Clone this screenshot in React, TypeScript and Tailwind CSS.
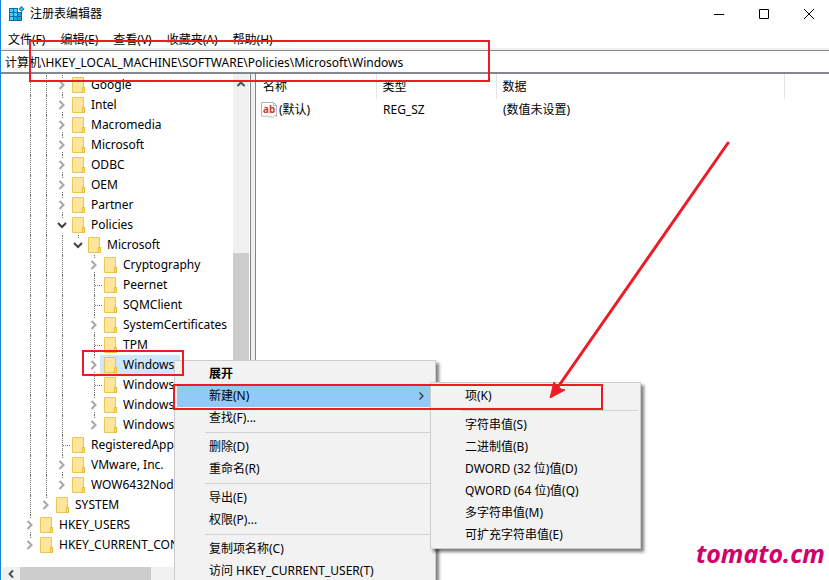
import { ChevronLeft, ChevronUp } from "lucide-react";

type TreeNode = {
  label: string;
  // which ancestor columns carry a guide line past this row
  guides: boolean[];
  state: "closed" | "open" | "leaf";
  last?: boolean;
  selected?: boolean;
};

const deep = [true, true, true, false];

const nodes: TreeNode[] = [
  { label: "Google", guides: [true, true], state: "closed" },
  { label: "Intel", guides: [true, true], state: "closed" },
  { label: "Macromedia", guides: [true, true], state: "closed" },
  { label: "Microsoft", guides: [true, true], state: "closed" },
  { label: "ODBC", guides: [true, true], state: "closed" },
  { label: "OEM", guides: [true, true], state: "closed" },
  { label: "Partner", guides: [true, true], state: "closed" },
  { label: "Policies", guides: [true, true], state: "open" },
  { label: "Microsoft", guides: [true, true, true], state: "open", last: true },
  { label: "Cryptography", guides: deep, state: "closed" },
  { label: "Peernet", guides: deep, state: "leaf" },
  { label: "SQMClient", guides: deep, state: "leaf" },
  { label: "SystemCertificates", guides: deep, state: "closed" },
  { label: "TPM", guides: deep, state: "leaf" },
  { label: "Windows", guides: deep, state: "closed", selected: true },
  { label: "Windows", guides: deep, state: "leaf" },
  { label: "Windows", guides: deep, state: "closed" },
  { label: "Windows", guides: deep, state: "closed", last: true },
  { label: "RegisteredApps", guides: [true, true], state: "leaf" },
  { label: "VMware, Inc.", guides: [true, true], state: "closed" },
  { label: "WOW6432Node", guides: [true, true], state: "closed", last: true },
  { label: "SYSTEM", guides: [true], state: "closed", last: true },
  { label: "HKEY_USERS", guides: [], state: "closed" },
  { label: "HKEY_CURRENT_CONFIG", guides: [], state: "closed", last: true },
];

const menus = ["文件(F)", "编辑(E)", "查看(V)", "收藏夹(A)", "帮助(H)"];

const contextMenu = [
  ["展开", "新建(N)", "查找(F)..."],
  ["删除(D)", "重命名(R)"],
  ["导出(E)", "权限(P)..."],
  ["复制项名称(C)", "访问 HKEY_CURRENT_USER(T)"],
];

const newMenu = [
  ["项(K)"],
  [
    "字符串值(S)",
    "二进制值(B)",
    "DWORD (32 位)值(D)",
    "QWORD (64 位)值(Q)",
    "多字符串值(M)",
    "可扩充字符串值(E)",
  ],
];

function RegistryIcon() {
  return (
    <svg className="h-4 w-4" viewBox="0 0 16 16" aria-hidden="true">
      <path d="M0 2h13v13H0z" fill="#0a6ea6" />
      <path d="M1 3h3v3H1zM5 3h3v3H5zM1 7h3v3H1zM5 7h3v3H5zM1 11h3v3H1z" fill="#4fcbf7" />
      <path d="M9 7h3v3H9zM5 11h3v3H5zM9 11h3v3H9z" fill="#1ea3dc" />
      <path d="M9 0h7v6H9z" fill="#fff" />
      <path d="m12.500 0 3 3-3 3-3-3z" fill="#1579ae" />
      <path d="m12.500 1.500 1.500 1.500-1.500 1.500L11 3z" fill="#52c8f2" />
    </svg>
  );
}

function FolderIcon() {
  return (
    <svg className="h-4 w-[13px] shrink-0" viewBox="0 0 13 16" aria-hidden="true">
      <path d="M.5.5h11v10h1v5H.5z" fill="#ffe69a" stroke="#eac551" />
      <path d="M10.500 15.500v-5h2v5z" fill="#ffe18a" stroke="#e6bb3c" />
    </svg>
  );
}

function StringIcon() {
  return (
    <svg className="h-4 w-4 shrink-0" viewBox="0 0 16 16" aria-hidden="true">
      <path d="M.5.5h12l3 3v11l-2-1-2 2-2-1-2 .5-2-1-2 .5-3-.5z" fill="#fff" stroke="#b5b5b5" />
      <path d="M12.500.500v3h3" fill="none" stroke="#b5b5b5" />
      <text x="2" y="11" fontSize="10" fontWeight="700" fontFamily="Noto Sans, sans-serif" fill="#d0401f">
        ab
      </text>
    </svg>
  );
}

function Expander({ open }: { open: boolean }) {
  return (
    <svg className="h-[10px] w-[10px] shrink-0" viewBox="0 0 10 10" fill="none" strokeWidth="2" aria-hidden="true">
      {open ? <path d="m1 3 4 4 4-4" stroke="#404040" /> : <path d="m2.500 1 4 4-4 4" stroke="#a6a6a6" />}
    </svg>
  );
}

function TreeRow({ node }: { node: TreeNode }) {
  return (
    <li className="flex h-5 items-center whitespace-nowrap">
      {node.guides.map((on, i) => (
        <span key={i} className="flex h-5 w-4 shrink-0 justify-center">
          {on && <span className="w-px border-l border-dotted border-[#707070]" />}
        </span>
      ))}
      {node.state === "leaf" ? (
        <span className="flex h-5 w-4 shrink-0 items-center pl-2">
          <span className="h-full border-l border-dotted border-[#707070]" />
          <span className="grow border-t border-dotted border-[#707070]" />
        </span>
      ) : (
        <button aria-label={node.label} className="flex h-5 w-4 shrink-0 flex-col items-center justify-between">
          <span className="h-[3px] border-l border-dotted border-[#707070]" />
          <Expander open={node.state === "open"} />
          {node.last || node.state === "open" ? (
            <span className="h-[3px]" />
          ) : (
            <span className="h-[3px] border-l border-dotted border-[#707070]" />
          )}
        </button>
      )}
      <span className={"flex h-5 items-center gap-1.5 " + (node.selected ? "-ml-0.5 bg-[#cce8ff] pr-1.5 pl-1" : "pl-0.5")}>
        <FolderIcon />
        <span>{node.label}</span>
      </span>
    </li>
  );
}

function MenuGroups({ groups, active }: { groups: string[][]; active?: string }) {
  return (
    <>
      {groups.map((group, i) => (
        <div key={i}>
          {i > 0 && <hr className="my-[3px] ml-7 border-t border-[#d3d3d3]" />}
          {group.map((label) => (
            <button
              key={label}
              role="menuitem"
              className={
                "flex h-[22px] w-full items-center justify-between pr-1.5 pl-8 whitespace-nowrap " +
                (label === active ? "bg-[#91c9f7] " : "") +
                (label === "展开" ? "font-bold" : "")
              }
            >
              {label}
              {label === active && (
                <svg width="5" height="8" viewBox="0 0 5 8" fill="none" aria-hidden="true">
                  <path d="m.5.5 3.500 3.500L.5 7.500" stroke="#303030" strokeWidth="1.200" />
                </svg>
              )}
            </button>
          ))}
        </div>
      ))}
    </>
  );
}

function App() {
  return (
    <div className="relative flex h-screen flex-col overflow-hidden border-l border-[#1883d7] bg-white font-['Noto_Sans','Noto_Sans_CJK_SC',sans-serif] text-[12px] leading-5 text-black">
      <header className="flex h-7 shrink-0 items-center pl-2">
        <RegistryIcon />
        <h1 className="ml-[5px] grow">注册表编辑器</h1>
        <div className="flex gap-[5px]">
          <button aria-label="最小化" className="flex w-10 justify-center">
            <svg width="10" height="10" aria-hidden="true">
              <path d="M0 5.500h10" stroke="#000" />
            </svg>
          </button>
          <button aria-label="最大化" className="flex w-10 justify-center">
            <svg width="10" height="10" aria-hidden="true">
              <path d="M.5.5h9v9h-9z" fill="none" stroke="#000" />
            </svg>
          </button>
          <button aria-label="关闭" className="flex w-10 justify-center">
            <svg width="10" height="10" aria-hidden="true">
              <path d="m0 0 10 10M10 0 0 10" stroke="#000" />
            </svg>
          </button>
        </div>
      </header>

      <nav className="flex h-[22px] shrink-0 items-center gap-[15px] border-b-2 border-[#f0f0f0] pt-1 pl-[7px]">
        {menus.map((m) => (
          <button key={m}>{m}</button>
        ))}
      </nav>

      <input
        aria-label="地址"
        className="h-6 w-full shrink-0 border-t border-b-2 border-[#828790] bg-white pl-1 outline-none"
        defaultValue="计算机\HKEY_LOCAL_MACHINE\SOFTWARE\Policies\Microsoft\Windows"
      />

      <main className="flex min-h-0 grow">
        <section className="flex w-[250px] shrink-0 flex-col border-r border-[#828790] px-px">
          <div className="flex min-h-0 grow">
            <ul className="min-w-0 grow overflow-hidden pt-px pl-5">
              {nodes.map((node, i) => (
                <TreeRow key={i} node={node} />
              ))}
            </ul>
            <div className="flex w-4 shrink-0 flex-col items-center bg-[#f0f0f0] pt-1">
              <ChevronUp size={12} strokeWidth={4} className="text-[#505050]" />
              <div className="mt-[163px] w-full grow bg-[#cdcdcd]" />
            </div>
          </div>
          <div className="flex h-[13px] shrink-0 items-center bg-[#f0f0f0]">
            <ChevronLeft size={12} strokeWidth={4} className="ml-[3px] text-[#505050]" />
            <div className="ml-[3px] h-full w-[131px] bg-[#cdcdcd]" />
          </div>
        </section>

        <section className="min-w-0 grow border-l-4 border-[#f0f0f0]">
          <div className="h-full border-l border-[#828790]">
            <table className="w-full table-fixed text-left">
              <colgroup>
                <col className="w-[120px]" />
                <col className="w-[120px]" />
                <col className="w-[288px]" />
                <col />
              </colgroup>
              <thead>
                <tr className="h-[25px]">
                  <th className="border-r border-[#e5e5e5] p-0 pl-[7px] font-normal">名称</th>
                  <th className="border-r border-[#e5e5e5] p-0 pl-1.5 font-normal">类型</th>
                  <th className="border-r border-[#e5e5e5] p-0 pl-1.5 font-normal">数据</th>
                  <th className="p-0" />
                </tr>
              </thead>
              <tbody>
                <tr className="h-[22px]">
                  <td className="p-0 pl-[5px]">
                    <span className="flex items-center gap-0.5">
                      <StringIcon />
                      (默认)
                    </span>
                  </td>
                  <td className="p-0 pl-[7px]">REG_SZ</td>
                  <td className="p-0 pl-[7px]">(数值未设置)</td>
                  <td className="p-0" />
                </tr>
              </tbody>
            </table>
          </div>
        </section>
      </main>

      <div
        role="menu"
        className="absolute top-[360px] left-[173px] w-[262px] border border-[#ccc] bg-[#f2f2f2] py-0.5 pr-[5px] pl-0.5 shadow-[3px_3px_3px_rgba(0,0,0,0.5)]"
      >
        <MenuGroups groups={contextMenu} active="新建(N)" />
      </div>
      <div
        role="menu"
        className="absolute top-[382px] left-[429px] w-[211px] border border-[#ccc] bg-[#f2f2f2] p-0.5 shadow-[3px_3px_3px_rgba(0,0,0,0.5)]"
      >
        <MenuGroups groups={newMenu} />
      </div>

      {/* red call-outs */}
      <div className="pointer-events-none absolute top-10 left-7 h-[42px] w-[461px] border-2 border-[#ed1c24]" />
      <div className="pointer-events-none absolute top-[350px] left-[81px] h-[26px] w-[102px] border-2 border-[#ed1c24]" />
      <div className="pointer-events-none absolute top-[384px] left-[172px] h-[26px] w-[430px] border-2 border-[#ed1c24]" />
      <svg
        className="pointer-events-none absolute top-[140px] left-[547px] h-[262px] w-[184px]"
        viewBox="0 0 184 262"
        aria-hidden="true"
      >
        <path d="M180 3 10 247" stroke="#ed1c24" strokeWidth="3" strokeLinecap="round" />
        <path d="M2 258 6 242l3 4 4 3 4 1z" fill="#ed1c24" stroke="#ed1c24" strokeLinejoin="round" />
      </svg>
      <p className="absolute right-1 bottom-[11px] text-[25px] leading-8 font-bold text-[#d4006a] italic">tomato.cm</p>
    </div>
  );
}

export default App;
